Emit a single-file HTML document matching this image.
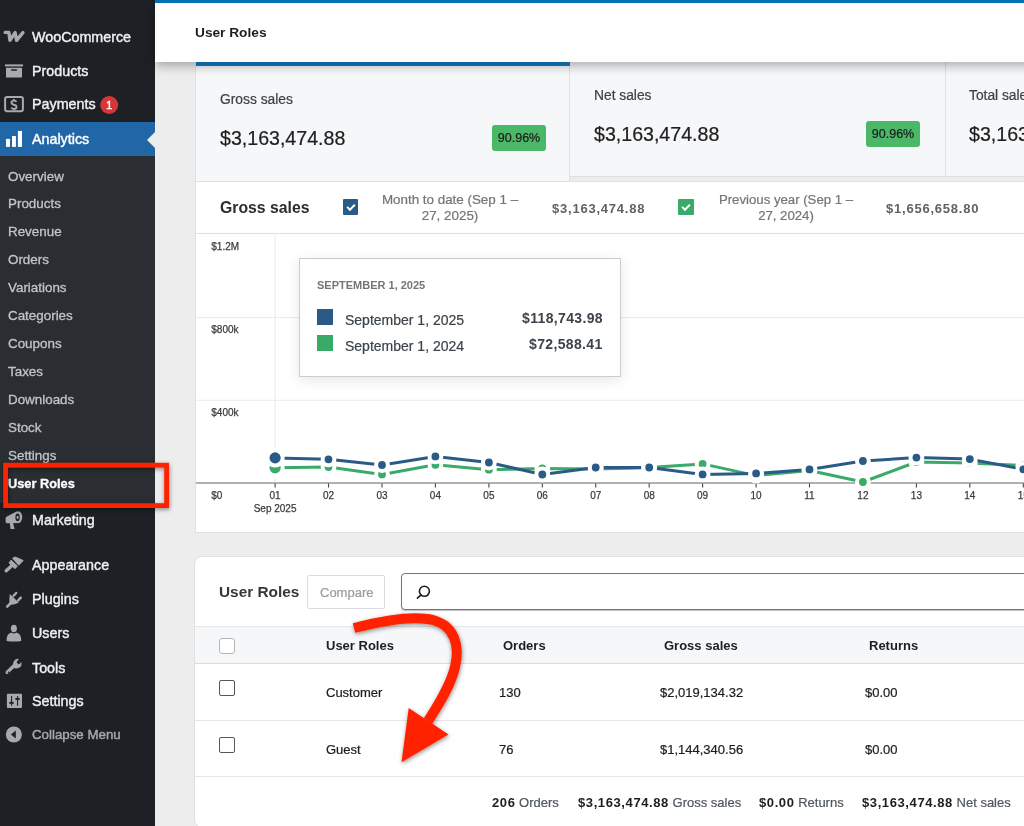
<!DOCTYPE html>
<html><head><meta charset="utf-8">
<style>
*{box-sizing:border-box;margin:0;padding:0}
html,body{width:1024px;height:826px;overflow:hidden;background:#ededed;font-family:"Liberation Sans",sans-serif;position:relative}
.a{position:absolute;white-space:nowrap;line-height:1}
#side{position:absolute;left:0;top:0;width:155px;height:826px;background:#1d2125}
#sub{position:absolute;left:0;top:156px;width:155px;height:347px;background:#2a2e32}
#act{position:absolute;left:0;top:122px;width:155px;height:34px;background:#2166a7}
.m{color:#f0f0f1;font-size:14.3px}
.s{color:#c3c4c7;font-size:13.4px}
#hdr{position:absolute;left:155px;top:0;width:900px;height:62px;background:#fff;border-top:3px solid #0071b2;box-shadow:0 4px 10px rgba(0,0,0,.3);z-index:5}
#card{position:absolute;left:195px;top:62px;width:840px;height:471px;background:#fff;border:1px solid #e0e0e0;border-top:0}
.tab{position:absolute;top:0;height:119px;background:#f6f7f9;border-right:1px solid #e0e0e0;border-bottom:1px solid #e0e0e0}
.lbl{color:#3f4245;font-size:13.8px}
.val{color:#1e1e1e;font-size:19.6px}
.badge{position:absolute;width:54px;height:26px;background:#4ab866;border-radius:3px;color:#1e1e1e;font-size:12.5px;text-align:center;line-height:26px}
#tbl{position:absolute;left:194px;top:556px;width:840px;height:272px;background:#fff;border:1px solid #e0e0e0;border-radius:8px}
.th{color:#1e1e1e;font-size:13px;font-weight:700}
.td{color:#1e1e1e;font-size:13px}
.cb{position:absolute;width:16px;height:16px;border:1.5px solid #50575e;border-radius:2px;background:#fff}
.lcb{position:absolute;width:15.6px;height:15.8px;border-radius:1px}
.lcb:after{content:"";position:absolute;left:4.2px;top:4.3px;width:6px;height:3px;border-left:2px solid #fff;border-bottom:2px solid #fff;transform:rotate(-45deg)}
.leg{font-size:13.4px;color:#757575;text-align:center;line-height:15.2px;white-space:normal}
.legv{font-size:13px;font-weight:700;color:#5f6266;letter-spacing:.78px}
#tip{position:absolute;left:299px;top:258px;width:322px;height:119px;background:#fff;border:1px solid #ccc;box-shadow:0 3px 12px rgba(0,0,0,.1);z-index:3}
#srch{position:absolute;left:401px;top:573px;width:640px;height:37px;border:1px solid #757575;border-radius:4px;background:#fff;box-shadow:0 1px 1px rgba(0,0,0,.25)}
.ft{font-size:13px;color:#50575e}
.ft b{color:#1e1e1e;font-weight:700;letter-spacing:.6px}
.a,.badge,#tip{will-change:transform}
.a,.badge{-webkit-text-stroke:0.22px currentColor}
.a[style*="font-weight:700"],.th,.legv,.ft b{-webkit-text-stroke:0}
.a.m{-webkit-text-stroke:0.4px currentColor}.a.s{-webkit-text-stroke:0.3px currentColor}
</style></head><body>
<div id="side">
  <div id="sub"></div>
  <div id="act"></div>
</div>
<svg class="a" style="left:0;top:0" width="155" height="826" viewBox="0 0 155 826">
<g fill="#a7aaad">
<path d="M5.2,32.4 L8.9,32.4 L9.9,40.3 L15.1,32.6 L16.6,40.3 L22.9,32.6" fill="none" stroke="#a7aaad" stroke-width="3.4" stroke-linejoin="round" stroke-linecap="round"/>
<rect x="5" y="64.4" width="18" height="2"/>
<path d="M6,67.8 h16 v9.8 h-16z M11.1,69.2 v1.6 h5.8 v-1.6z" fill-rule="evenodd"/>
<rect x="5.1" y="97.1" width="17.8" height="14.1" rx="2" fill="none" stroke="#a7aaad" stroke-width="2"/>
<path d="M16.4,101.9 Q15.9,100.6 13.9,100.6 Q11.5,100.6 11.5,102.6 Q11.5,104.3 13.9,104.7 Q16.5,105.1 16.5,107 Q16.5,108.9 13.9,108.9 Q11.8,108.9 11.3,107.5" fill="none" stroke="#a7aaad" stroke-width="1.9"/><path d="M13.9,99 V100.8 M13.9,108.7 V109.9" stroke="#a7aaad" stroke-width="1.9"/>
</g>
<g fill="#fff"><rect x="6" y="138.9" width="4" height="8"/><rect x="12" y="136" width="3.9" height="10.9"/><rect x="17.9" y="130.9" width="4.1" height="16"/></g>
<g fill="#a7aaad">
<path d="M5.6,518.5 Q5.6,517 7,516.4 L17,511.3 L19.5,523 L7,523.2 Q5.6,523 5.6,521.5z"/>
<path d="M9.8,523 L13,523 L14.6,529 L10.6,529z"/>
<ellipse cx="18.3" cy="517.1" rx="3.9" ry="5.8"/>
<ellipse cx="17.6" cy="517.3" rx="2.2" ry="3.9" fill="#1d2327"/>
<ellipse cx="17.6" cy="517.3" rx="1" ry="1.6"/>
<path d="M6.2,570.8 L11.2,566.2" stroke="#a7aaad" stroke-width="3.4" stroke-linecap="round"/>
<path d="M9,562.9 L11,560.2 L17.4,566 L15,568.7z" stroke="#a7aaad" stroke-width="1" stroke-linejoin="round"/>
<path d="M12.6,558.5 Q13.8,556.8 15.2,557.1 Q19,558.4 23.3,560.6 L18.7,565.2z" stroke="#a7aaad" stroke-width="0.8" stroke-linejoin="round"/>
<path d="M9.8,594 L18.8,602.6 Q14,605.2 9.6,604.8 Q9,599 9.8,594z"/>
<path d="M7.2,606.6 L10.8,603" stroke="#a7aaad" stroke-width="2.6" stroke-linecap="round"/>
<path d="M13.6,595.8 L16.2,593" stroke="#a7aaad" stroke-width="2.4" stroke-linecap="round"/>
<path d="M18.2,600.3 L20.8,597.6" stroke="#a7aaad" stroke-width="2.4" stroke-linecap="round"/>
<ellipse cx="13.9" cy="628.5" rx="3" ry="3.8"/>
<path d="M6.6,641 Q6.4,633.6 11.5,632.6 Q13.9,634.6 16.3,632.6 Q21.4,633.6 21.2,641 Q13.9,642 6.6,641z"/>
<path d="M7.2,672.3 L14.2,665.6" stroke="#a7aaad" stroke-width="3.4" stroke-linecap="round"/>
<path d="M13.3,666.5 Q12.3,661.5 15.5,659.4 Q17,658.6 18.8,659 L16.6,662.2 L18.6,664.4 L21.5,662.3 Q22,664.3 20.9,666.5 Q18.4,669 15,668.4z"/>
<circle cx="8.5" cy="672.4" r="0.8" fill="#1d2327"/>
<rect x="6.9" y="693.8" width="15.1" height="14.2" rx="1"/>
<g fill="#1d2327"><rect x="11" y="696" width="1.1" height="9.8"/><rect x="9.3" y="701.9" width="4.4" height="1.9"/><rect x="17" y="696" width="1.1" height="9.8"/><rect x="15.3" y="698" width="4.4" height="1.9"/></g>
<circle cx="13.85" cy="734.5" r="8"/>
<path d="M10.9,734.5 L15.8,730.6 L15.8,738.4z" fill="#1d2327"/>
</g>
<circle cx="109.2" cy="105" r="9" fill="#d63638"/>
<text x="109.2" y="109.3" font-family="Liberation Sans" font-size="11.5" fill="#fff" stroke="#fff" stroke-width="0.35" text-anchor="middle">1</text>
<path d="M155,132 L147,140 L155,148z" fill="#ededed"/>
</svg>
<!-- sidebar text -->
<div class="a m" style="left:32px;top:30px">WooCommerce</div>
<div class="a m" style="left:32px;top:64px">Products</div>
<div class="a m" style="left:32px;top:97.3px">Payments</div>
<div class="a m" style="left:32px;top:132px;color:#fff">Analytics</div>
<div class="a s" style="left:8px;top:170px">Overview</div>
<div class="a s" style="left:8px;top:197px">Products</div>
<div class="a s" style="left:8px;top:225px">Revenue</div>
<div class="a s" style="left:8px;top:253px">Orders</div>
<div class="a s" style="left:8px;top:281px">Variations</div>
<div class="a s" style="left:8px;top:309px">Categories</div>
<div class="a s" style="left:8px;top:337px">Coupons</div>
<div class="a s" style="left:8px;top:365px">Taxes</div>
<div class="a s" style="left:8px;top:393px">Downloads</div>
<div class="a s" style="left:8px;top:421px">Stock</div>
<div class="a s" style="left:8px;top:449px">Settings</div>
<div class="a s" style="left:8px;top:477.5px;color:#fff;font-weight:700;font-size:12.8px">User Roles</div>
<div class="a m" style="left:32px;top:513.3px">Marketing</div>
<div class="a m" style="left:32px;top:558px">Appearance</div>
<div class="a m" style="left:32px;top:591.7px">Plugins</div>
<div class="a m" style="left:32px;top:626.2px">Users</div>
<div class="a m" style="left:32px;top:661px">Tools</div>
<div class="a m" style="left:32px;top:694.3px">Settings</div>
<div class="a m" style="left:32px;top:728.3px;color:#a7aaad;font-size:13.3px">Collapse Menu</div>

<div id="hdr"><div class="a" style="left:40px;top:22.5px;font-size:13.7px;font-weight:700;color:#1e1e1e">User Roles</div></div>

<div style="position:absolute;left:196px;top:62px;width:374px;height:3.6px;background:#0f66a2;z-index:6"></div>
<div id="card">
  <div class="tab" style="left:0;width:374px;height:119.5px;border-top:3.6px solid #0f66a2"></div>
  <div class="tab" style="left:374px;width:376px;height:115.4px"></div>
  <div class="tab" style="left:750px;width:100px;height:115.4px"></div>
  <div style="position:absolute;left:0;top:171px;width:840px;height:1px;background:#e0e0e0"></div>
  <div style="position:absolute;left:374px;top:115.4px;width:476px;height:4.7px;background:#ececec;border-bottom:1px solid #e2e2e2"></div>
</div>
<div class="a lbl" style="left:220px;top:93.3px">Gross sales</div>
<div class="a val" style="left:220px;top:129px">$3,163,474.88</div>
<div class="badge" style="left:492px;top:125px">90.96%</div>
<div class="a lbl" style="left:593.5px;top:89.3px">Net sales</div>
<div class="a val" style="left:594px;top:125px">$3,163,474.88</div>
<div class="badge" style="left:866px;top:121px">90.96%</div>
<div class="a lbl" style="left:969px;top:89.3px">Total sales</div>
<div class="a val" style="left:969px;top:125px">$3,163,474.88</div>
<div class="a" style="left:220px;top:199.5px;font-size:15.8px;font-weight:700;color:#2a2e32">Gross sales</div>
<div class="lcb" style="left:342.8px;top:199.4px;background:#2a5b86"></div>
<div class="a leg" style="left:370.5px;top:192.2px;width:158px">Month to date (Sep 1 –</div><div class="a leg" style="left:370.5px;top:208px;width:158px">27, 2025)</div>
<div class="a legv" style="left:551.5px;top:202px">$3,163,474.88</div>
<div class="lcb" style="left:678px;top:199.4px;background:#3aaa68"></div>
<div class="a leg" style="left:706.5px;top:192.2px;width:158px;font-size:13.2px">Previous year (Sep 1 –</div><div class="a leg" style="left:706.5px;top:208px;width:158px;font-size:13.2px">27, 2024)</div>
<div class="a legv" style="left:886px;top:202px">$1,656,658.80</div>
<svg class="a" style="left:0;top:0" width="1024" height="826" viewBox="0 0 1024 826">
<line x1="196" y1="317.5" x2="1024" y2="317.5" stroke="#ebebeb" stroke-width="1"/>
<line x1="196" y1="400.3" x2="1024" y2="400.3" stroke="#ebebeb" stroke-width="1"/>
<line x1="275.1" y1="234" x2="275.1" y2="483" stroke="#ebebeb" stroke-width="1"/>
<line x1="196" y1="483" x2="1024" y2="483" stroke="#b0b0b0" stroke-width="1.8"/>
<line x1="275.1" y1="483.5" x2="275.1" y2="487.5" stroke="#444" stroke-width="1.1"/>
<line x1="328.5" y1="483.5" x2="328.5" y2="487.5" stroke="#444" stroke-width="1.1"/>
<line x1="382.0" y1="483.5" x2="382.0" y2="487.5" stroke="#444" stroke-width="1.1"/>
<line x1="435.4" y1="483.5" x2="435.4" y2="487.5" stroke="#444" stroke-width="1.1"/>
<line x1="488.9" y1="483.5" x2="488.9" y2="487.5" stroke="#444" stroke-width="1.1"/>
<line x1="542.3" y1="483.5" x2="542.3" y2="487.5" stroke="#444" stroke-width="1.1"/>
<line x1="595.7" y1="483.5" x2="595.7" y2="487.5" stroke="#444" stroke-width="1.1"/>
<line x1="649.2" y1="483.5" x2="649.2" y2="487.5" stroke="#444" stroke-width="1.1"/>
<line x1="702.6" y1="483.5" x2="702.6" y2="487.5" stroke="#444" stroke-width="1.1"/>
<line x1="756.1" y1="483.5" x2="756.1" y2="487.5" stroke="#444" stroke-width="1.1"/>
<line x1="809.5" y1="483.5" x2="809.5" y2="487.5" stroke="#444" stroke-width="1.1"/>
<line x1="862.9" y1="483.5" x2="862.9" y2="487.5" stroke="#444" stroke-width="1.1"/>
<line x1="916.4" y1="483.5" x2="916.4" y2="487.5" stroke="#444" stroke-width="1.1"/>
<line x1="969.8" y1="483.5" x2="969.8" y2="487.5" stroke="#444" stroke-width="1.1"/>
<line x1="1023.3" y1="483.5" x2="1023.3" y2="487.5" stroke="#444" stroke-width="1.1"/>
<polyline points="275.1,467.8 328.5,467.0 382.0,474.4 435.4,464.8 488.9,469.7 542.3,468.5 595.7,469.0 649.2,467.6 702.6,463.9 756.1,475.6 809.5,470.5 862.9,482.0 916.4,462.0 969.8,463.0 1023.3,465.4" fill="none" stroke="#3aaa68" stroke-width="3" stroke-linejoin="round"/>
<polyline points="275.1,457.9 328.5,459.3 382.0,465.0 435.4,456.4 488.9,462.5 542.3,474.5 595.7,467.5 649.2,467.5 702.6,474.4 756.1,473.4 809.5,469.4 862.9,461.0 916.4,457.6 969.8,459.1 1023.3,469.3" fill="none" stroke="#2a5b86" stroke-width="3" stroke-linejoin="round"/>
<circle cx="275.1" cy="467.8" r="7.6" fill="#3aaa68" stroke="#fff" stroke-width="4"/>
<circle cx="328.5" cy="467.0" r="5.9" fill="#3aaa68" stroke="#fff" stroke-width="4"/>
<circle cx="382.0" cy="474.4" r="5.9" fill="#3aaa68" stroke="#fff" stroke-width="4"/>
<circle cx="435.4" cy="464.8" r="5.9" fill="#3aaa68" stroke="#fff" stroke-width="4"/>
<circle cx="488.9" cy="469.7" r="5.9" fill="#3aaa68" stroke="#fff" stroke-width="4"/>
<circle cx="542.3" cy="468.5" r="5.9" fill="#3aaa68" stroke="#fff" stroke-width="4"/>
<circle cx="595.7" cy="469.0" r="5.9" fill="#3aaa68" stroke="#fff" stroke-width="4"/>
<circle cx="649.2" cy="467.6" r="5.9" fill="#3aaa68" stroke="#fff" stroke-width="4"/>
<circle cx="702.6" cy="463.9" r="5.9" fill="#3aaa68" stroke="#fff" stroke-width="4"/>
<circle cx="756.1" cy="475.6" r="5.9" fill="#3aaa68" stroke="#fff" stroke-width="4"/>
<circle cx="809.5" cy="470.5" r="5.9" fill="#3aaa68" stroke="#fff" stroke-width="4"/>
<circle cx="862.9" cy="482.0" r="5.9" fill="#3aaa68" stroke="#fff" stroke-width="4"/>
<circle cx="916.4" cy="462.0" r="5.9" fill="#3aaa68" stroke="#fff" stroke-width="4"/>
<circle cx="969.8" cy="463.0" r="5.9" fill="#3aaa68" stroke="#fff" stroke-width="4"/>
<circle cx="1023.3" cy="465.4" r="5.9" fill="#3aaa68" stroke="#fff" stroke-width="4"/>
<circle cx="275.1" cy="457.9" r="7.6" fill="#2a5b86" stroke="#fff" stroke-width="4"/>
<circle cx="328.5" cy="459.3" r="5.9" fill="#2a5b86" stroke="#fff" stroke-width="4"/>
<circle cx="382.0" cy="465.0" r="5.9" fill="#2a5b86" stroke="#fff" stroke-width="4"/>
<circle cx="435.4" cy="456.4" r="5.9" fill="#2a5b86" stroke="#fff" stroke-width="4"/>
<circle cx="488.9" cy="462.5" r="5.9" fill="#2a5b86" stroke="#fff" stroke-width="4"/>
<circle cx="542.3" cy="474.5" r="5.9" fill="#2a5b86" stroke="#fff" stroke-width="4"/>
<circle cx="595.7" cy="467.5" r="5.9" fill="#2a5b86" stroke="#fff" stroke-width="4"/>
<circle cx="649.2" cy="467.5" r="5.9" fill="#2a5b86" stroke="#fff" stroke-width="4"/>
<circle cx="702.6" cy="474.4" r="5.9" fill="#2a5b86" stroke="#fff" stroke-width="4"/>
<circle cx="756.1" cy="473.4" r="5.9" fill="#2a5b86" stroke="#fff" stroke-width="4"/>
<circle cx="809.5" cy="469.4" r="5.9" fill="#2a5b86" stroke="#fff" stroke-width="4"/>
<circle cx="862.9" cy="461.0" r="5.9" fill="#2a5b86" stroke="#fff" stroke-width="4"/>
<circle cx="916.4" cy="457.6" r="5.9" fill="#2a5b86" stroke="#fff" stroke-width="4"/>
<circle cx="969.8" cy="459.1" r="5.9" fill="#2a5b86" stroke="#fff" stroke-width="4"/>
<circle cx="1023.3" cy="469.3" r="5.9" fill="#2a5b86" stroke="#fff" stroke-width="4"/>
<text x="211.3" y="250.3" font-family="Liberation Sans" font-size="10" fill="#3c3c3c" stroke="#3c3c3c" stroke-width="0.25">$1.2M</text>
<text x="211.3" y="332.5" font-family="Liberation Sans" font-size="10" fill="#3c3c3c" stroke="#3c3c3c" stroke-width="0.25">$800k</text>
<text x="211.3" y="416" font-family="Liberation Sans" font-size="10" fill="#3c3c3c" stroke="#3c3c3c" stroke-width="0.25">$400k</text>
<text x="211.3" y="498.5" font-family="Liberation Sans" font-size="10" fill="#3c3c3c" stroke="#3c3c3c" stroke-width="0.25">$0</text>
<text x="275.1" y="498.5" font-family="Liberation Sans" font-size="10" fill="#3c3c3c" stroke="#3c3c3c" stroke-width="0.25" text-anchor="middle">01</text>
<text x="328.5" y="498.5" font-family="Liberation Sans" font-size="10" fill="#3c3c3c" stroke="#3c3c3c" stroke-width="0.25" text-anchor="middle">02</text>
<text x="382.0" y="498.5" font-family="Liberation Sans" font-size="10" fill="#3c3c3c" stroke="#3c3c3c" stroke-width="0.25" text-anchor="middle">03</text>
<text x="435.4" y="498.5" font-family="Liberation Sans" font-size="10" fill="#3c3c3c" stroke="#3c3c3c" stroke-width="0.25" text-anchor="middle">04</text>
<text x="488.9" y="498.5" font-family="Liberation Sans" font-size="10" fill="#3c3c3c" stroke="#3c3c3c" stroke-width="0.25" text-anchor="middle">05</text>
<text x="542.3" y="498.5" font-family="Liberation Sans" font-size="10" fill="#3c3c3c" stroke="#3c3c3c" stroke-width="0.25" text-anchor="middle">06</text>
<text x="595.7" y="498.5" font-family="Liberation Sans" font-size="10" fill="#3c3c3c" stroke="#3c3c3c" stroke-width="0.25" text-anchor="middle">07</text>
<text x="649.2" y="498.5" font-family="Liberation Sans" font-size="10" fill="#3c3c3c" stroke="#3c3c3c" stroke-width="0.25" text-anchor="middle">08</text>
<text x="702.6" y="498.5" font-family="Liberation Sans" font-size="10" fill="#3c3c3c" stroke="#3c3c3c" stroke-width="0.25" text-anchor="middle">09</text>
<text x="756.1" y="498.5" font-family="Liberation Sans" font-size="10" fill="#3c3c3c" stroke="#3c3c3c" stroke-width="0.25" text-anchor="middle">10</text>
<text x="809.5" y="498.5" font-family="Liberation Sans" font-size="10" fill="#3c3c3c" stroke="#3c3c3c" stroke-width="0.25" text-anchor="middle">11</text>
<text x="862.9" y="498.5" font-family="Liberation Sans" font-size="10" fill="#3c3c3c" stroke="#3c3c3c" stroke-width="0.25" text-anchor="middle">12</text>
<text x="916.4" y="498.5" font-family="Liberation Sans" font-size="10" fill="#3c3c3c" stroke="#3c3c3c" stroke-width="0.25" text-anchor="middle">13</text>
<text x="969.8" y="498.5" font-family="Liberation Sans" font-size="10" fill="#3c3c3c" stroke="#3c3c3c" stroke-width="0.25" text-anchor="middle">14</text>
<text x="1023.3" y="498.5" font-family="Liberation Sans" font-size="10" fill="#3c3c3c" stroke="#3c3c3c" stroke-width="0.25" text-anchor="middle">15</text>
<text x="275.1" y="512.3" font-family="Liberation Sans" font-size="10" fill="#3c3c3c" stroke="#3c3c3c" stroke-width="0.25" text-anchor="middle">Sep 2025</text>
</svg>
<div id="tip">
  <div class="a" style="left:17px;top:21.3px;font-size:11px;font-weight:700;color:#757575">SEPTEMBER 1, 2025</div>
  <div style="position:absolute;left:17px;top:49.5px;width:16px;height:16px;background:#2a5b86"></div>
  <div style="position:absolute;left:17px;top:75.5px;width:16px;height:16px;background:#3aaa68"></div>
  <div class="a" style="left:45px;top:54px;font-size:14px;color:#3c434a">September 1, 2025</div>
  <div class="a" style="left:45px;top:80px;font-size:14px;color:#3c434a">September 1, 2024</div>
  <div class="a" style="right:17.5px;top:52.3px;font-size:14px;font-weight:700;color:#3c434a;letter-spacing:.35px">$118,743.98</div>
  <div class="a" style="right:17.5px;top:78.3px;font-size:14px;font-weight:700;color:#3c434a;letter-spacing:.35px">$72,588.41</div>
</div>
<div id="tbl"></div>
<div class="a" style="left:219px;top:584px;font-size:15.4px;font-weight:700;color:#33383c">User Roles</div>
<div style="position:absolute;left:307px;top:574.5px;width:78px;height:34.5px;border:1px solid #dcdcde;border-radius:2px;background:#fff"></div>
<div class="a" style="left:319.5px;top:585.5px;font-size:13px;color:#999ca0">Compare</div>
<div id="srch"></div>
<svg class="a" style="left:410px;top:580px" width="24" height="24" viewBox="0 0 24 24"><circle cx="14.4" cy="11.3" r="5" fill="none" stroke="#1e1e1e" stroke-width="1.6"/><path d="M11,14.8 L7.4,18.2" stroke="#1e1e1e" stroke-width="1.6" stroke-linecap="round"/></svg>
<div style="position:absolute;left:195px;top:626px;width:829px;height:37.5px;background:#f6f7f9;border-top:1px solid #e6e6e6;border-bottom:1px solid #dcdcde"></div>
<div style="position:absolute;left:195px;top:720px;width:829px;height:1px;background:#e6e6e6"></div>
<div style="position:absolute;left:195px;top:776px;width:829px;height:1px;background:#e6e6e6"></div>
<div class="cb" style="left:218.5px;top:637.5px;border-color:#b4b6b9;border-radius:3px"></div>
<div class="cb" style="left:218.5px;top:680px"></div>
<div class="cb" style="left:218.5px;top:736.7px"></div>
<div class="a th" style="left:326px;top:639px">User Roles</div>
<div class="a th" style="left:503.4px;top:639px">Orders</div>
<div class="a th" style="left:664px;top:639px">Gross sales</div>
<div class="a th" style="left:869.3px;top:639px">Returns</div>
<div class="a td" style="left:325.7px;top:686px">Customer</div>
<div class="a td" style="left:499px;top:686px">130</div>
<div class="a td" style="left:659.6px;top:686px">$2,019,134.32</div>
<div class="a td" style="left:865.4px;top:686px">$0.00</div>
<div class="a td" style="left:325.7px;top:742.5px">Guest</div>
<div class="a td" style="left:499px;top:742.5px">76</div>
<div class="a td" style="left:659.6px;top:742.5px">$1,144,340.56</div>
<div class="a td" style="left:865.4px;top:742.5px">$0.00</div>
<div class="a ft" style="left:491.5px;top:795.5px"><b>206</b> Orders</div>
<div class="a ft" style="left:577.9px;top:795.5px"><b>$3,163,474.88</b> Gross sales</div>
<div class="a ft" style="left:758.6px;top:795.5px"><b>$0.00</b> Returns</div>
<div class="a ft" style="left:861.7px;top:795.5px"><b>$3,163,474.88</b> Net sales</div>
<svg class="a" style="left:0;top:0;z-index:10" width="1024" height="826" viewBox="0 0 1024 826">
<defs><filter id="sh" x="-20%" y="-20%" width="140%" height="140%"><feDropShadow dx="0.5" dy="1.5" stdDeviation="2.2" flood-color="#000" flood-opacity="0.45"/></filter></defs>
<rect x="5.6" y="465.2" width="161" height="40.4" fill="none" stroke="#ff2200" stroke-width="4.8" filter="url(#sh)"/>
<g filter="url(#sh)">
<path d="M354,628 C385,620 413,615 433,620 C455,626 460,646 455,667 C451,684 441,701 428,721" fill="none" stroke="#ff2200" stroke-width="10"/>
<path d="M408.7,707.9 L448.5,734.6 L401.5,762.3z" fill="#ff2200"/>
</g>
</svg>
</body></html>
